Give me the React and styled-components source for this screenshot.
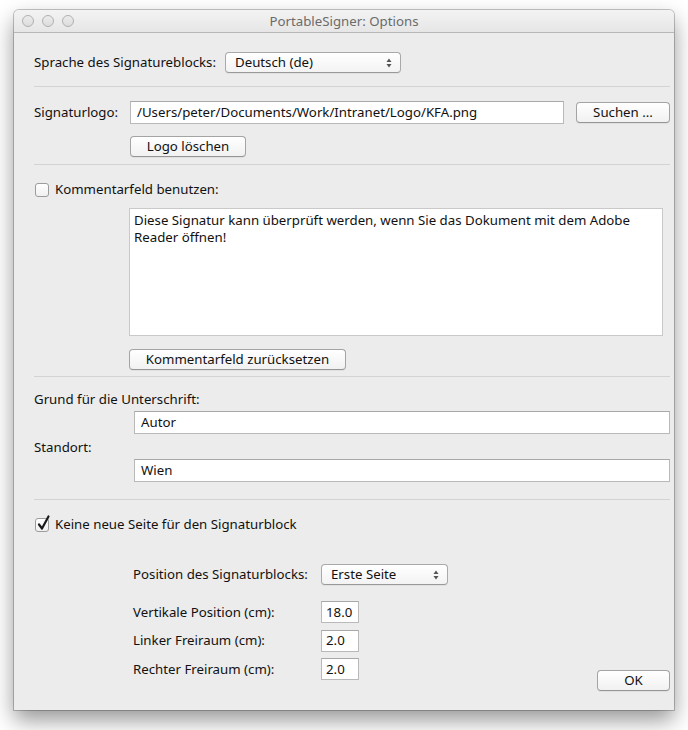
import React from "react";
import styled, { createGlobalStyle } from "styled-components";

const Global = createGlobalStyle`
  html, body { margin: 0; padding: 0; background: #ffffff; }
  body {
    font-family: "Noto Sans", "Open Sans", sans-serif;
    font-size: 13.25px;
    line-height: 17px;
    color: #111;
  }
  * { box-sizing: border-box; }
`;

const Page = styled.div`
  padding: 10px 14px 20px 14px;
  width: 688px;
`;

const Window = styled.div`
  width: 660px;
  height: 700px;
  background: #ececec;
  border-radius: 5px 5px 0 0;
  box-shadow: 0 0 0 1px rgba(0, 0, 0, 0.22), 0 10px 22px rgba(0, 0, 0, 0.42);
  display: flex;
  flex-direction: column;
  overflow: hidden;
`;

const TitleBar = styled.div`
  height: 23px;
  flex: none;
  background: linear-gradient(#f3f3f3, #e6e6e6);
  border-bottom: 1px solid #b7b7b7;
  display: flex;
  align-items: center;
  position: relative;
`;

const Lights = styled.div`
  display: flex;
  gap: 8px;
  padding-left: 8px;
  position: absolute;
  left: 0;
  top: 5px;
`;

const Light = styled.span`
  width: 12px;
  height: 12px;
  border-radius: 50%;
  border: 1px solid #b0b0b0;
  background: linear-gradient(#ececec, #dcdcdc);
`;

const Title = styled.div`
  flex: 1;
  text-align: center;
  color: #6b6b6b;
  font-size: 13.25px;
`;

const Content = styled.div`
  flex: 1;
  padding: 0 4px 20px 20px;
  display: flex;
  flex-direction: column;
`;

const Section = styled.div`
  display: flex;
  flex-direction: column;
  padding-top: ${(p) => p.$pt}px;
  padding-bottom: ${(p) => p.$pb || 0}px;
`;

const Separator = styled.div`
  height: 1px;
  flex: none;
  background: #d3d3d3;
`;

const Row = styled.div`
  display: flex;
  align-items: center;
  gap: ${(p) => p.$gap || 0}px;
  margin-top: ${(p) => p.$mt || 0}px;
  padding-left: ${(p) => p.$indent || 0}px;
`;

const Label = styled.span`
  white-space: nowrap;
  width: ${(p) => (p.$w ? `${p.$w}px` : "auto")};
  flex: none;
`;

const TextLine = styled.div`
  margin-top: ${(p) => p.$mt || 0}px;
  height: 17px;
`;

const PopupWrap = styled.div`
  width: ${(p) => p.$w}px;
  height: 21px;
  border: 1px solid #a9a9a9;
  border-bottom-color: #9a9a9a;
  border-radius: 4px;
  background: linear-gradient(#ffffff, #f3f3f3);
  display: flex;
  align-items: center;
  padding: 0 8px 0 9px;
  box-shadow: 0 1px 0 rgba(0, 0, 0, 0.05);
`;

const PopupText = styled.span`
  flex: 1;
  white-space: nowrap;
`;

const Button = styled.button`
  font: inherit;
  color: #111;
  width: ${(p) => p.$w}px;
  height: 21px;
  padding: 0;
  border: 1px solid #a4a4a4;
  border-bottom-color: #959595;
  border-radius: 4px;
  background: linear-gradient(#ffffff, #f1f1f1);
  box-shadow: 0 1px 0 rgba(0, 0, 0, 0.05);
  display: flex;
  align-items: center;
  justify-content: center;
  flex: none;
  white-space: nowrap;
`;

const Field = styled.div`
  height: ${(p) => p.$h || 23}px;
  width: ${(p) => (p.$w ? `${p.$w}px` : "auto")};
  flex: ${(p) => (p.$w ? "none" : 1)};
  background: #fff;
  border: 1px solid #b9b9b9;
  border-top-color: #a8a8a8;
  display: flex;
  align-items: center;
  padding-left: ${(p) => p.$pl || 6}px;
  white-space: nowrap;
  overflow: hidden;
`;

const TextArea = styled.textarea`
  display: block;
  font: inherit;
  color: #111;
  width: 534px;
  height: 128px;
  margin-top: 10px;
  margin-left: 95px;
  padding: 3px 4px;
  border: 1px solid #c9c9c9;
  background: #fff;
  resize: none;
  outline: none;
  overflow: hidden;
`;

const CheckRow = styled.label`
  display: flex;
  align-items: center;
  height: 17px;
  gap: 6px;
  padding-left: 1px;
`;

const CheckBox = styled.span`
  width: 14px;
  height: 14px;
  border: 1px solid #9c9c9c;
  border-radius: 3px;
  background: linear-gradient(#ffffff, #f0f0f0);
  position: relative;
  flex: none;
`;

const CheckMark = styled.svg`
  position: absolute;
  left: 1px;
  top: -4px;
`;

const Indent = styled.div`
  margin-left: ${(p) => p.$ml}px;
  margin-top: ${(p) => p.$mt || 0}px;
`;

const Footer = styled.div`
  display: flex;
  align-items: flex-end;
  justify-content: space-between;
  margin-top: 16px;
`;

const Grid = styled.div`
  display: grid;
  grid-template-columns: 188px auto;
  row-gap: 6.5px;
  align-items: center;
  margin-left: 99px;
  margin-top: ${(p) => p.$mt || 0}px;
  margin-bottom: ${(p) => p.$mb || 0}px;
`;

function Stepper() {
  return (
    <svg width="6" height="10" viewBox="0 0 6 10">
      <path d="M3 0.5 L5.5 4 L0.5 4 Z" fill="#555" />
      <path d="M3 9.5 L5.5 6 L0.5 6 Z" fill="#555" />
    </svg>
  );
}

function Popup({ w, children }) {
  return (
    <PopupWrap $w={w}>
      <PopupText>{children}</PopupText>
      <Stepper />
    </PopupWrap>
  );
}

function Check({ checked, children }) {
  return (
    <CheckRow>
      <CheckBox>
        {checked && (
          <CheckMark width="14" height="16" viewBox="0 0 14 16">
            <path
              d="M2 9.5 L5 13.5 L11.5 1.5"
              fill="none"
              stroke="#1a1a1a"
              strokeWidth="2.2"
              strokeLinecap="round"
              strokeLinejoin="round"
            />
          </CheckMark>
        )}
      </CheckBox>
      <span>{children}</span>
    </CheckRow>
  );
}

export default function App() {
  return (
    <Page>
      <Global />
      <Window>
        <TitleBar>
          <Lights>
            <Light />
            <Light />
            <Light />
          </Lights>
          <Title>PortableSigner: Options</Title>
        </TitleBar>
        <Content>
          <Section $pt={19} $pb={13}>
            <Row $gap={9}>
              <Label>Sprache des Signatureblocks:</Label>
              <Popup w={176}>Deutsch (de)</Popup>
            </Row>
          </Section>
          <Separator />
          <Section $pt={14} $pb={7}>
            <Row>
              <Label $w={96}>Signaturlogo:</Label>
              <Field $w={434}>/Users/peter/Documents/Work/Intranet/Logo/KFA.png</Field>
              <Indent $ml={12}>
                <Button $w={94}>Suchen ...</Button>
              </Indent>
            </Row>
            <Indent $ml={96} $mt={12}>
              <Button $w={116}>Logo löschen</Button>
            </Indent>
          </Section>
          <Separator />
          <Section $pt={16} $pb={6}>
            <Check>Kommentarfeld benutzen:</Check>
            <TextArea
              readOnly
              value="Diese Signatur kann überprüft werden, wenn Sie das Dokument mit dem Adobe Reader öffnen!"
            />
            <Indent $ml={95} $mt={13}>
              <Button $w={217}>Kommentarfeld zurücksetzen</Button>
            </Indent>
          </Section>
          <Separator />
          <Section $pt={14} $pb={17}>
            <TextLine>Grund für die Unterschrift:</TextLine>
            <Row $mt={3} $indent={100}>
              <Field>Autor</Field>
            </Row>
            <TextLine $mt={5}>Standort:</TextLine>
            <Row $mt={3} $indent={100}>
              <Field>Wien</Field>
            </Row>
          </Section>
          <Separator />
          <Section $pt={16}>
            <Check checked>Keine neue Seite für den Signaturblock</Check>
            <Grid $mt={31}>
              <Label>Position des Signaturblocks:</Label>
              <Popup w={127}>Erste Seite</Popup>
            </Grid>
            <Footer>
              <Grid $mb={11}>
                <Label>Vertikale Position (cm):</Label>
                <Field $w={38} $h={22} $pl={4}>18.0</Field>
                <Label>Linker Freiraum (cm):</Label>
                <Field $w={38} $h={22} $pl={4}>2.0</Field>
                <Label>Rechter Freiraum (cm):</Label>
                <Field $w={38} $h={22} $pl={4}>2.0</Field>
              </Grid>
              <Button $w={73}>OK</Button>
            </Footer>
          </Section>
        </Content>
      </Window>
    </Page>
  );
}
